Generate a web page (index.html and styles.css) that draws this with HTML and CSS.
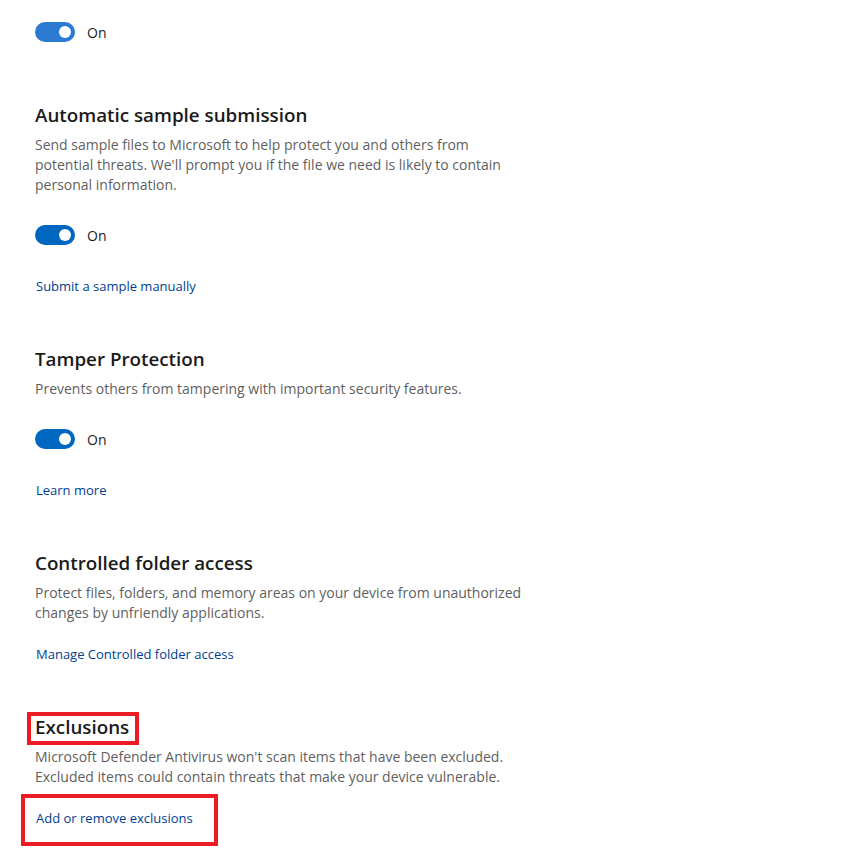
FILE: index.html
```html
<!DOCTYPE html>
<html lang="en">
<head>
    <meta charset="UTF-8">
    <meta name="viewport" content="width=device-width, initial-scale=1.0">
    <title>Virus &amp; threat protection settings</title>
    <link rel="stylesheet" href="styles.css">
</head>
<body>

<div class="page">
    <div class="toggle-row first">
        <span class="toggle light"><span class="knob"></span></span>
        <span class="toggle-label">On</span>
    </div>

    <section class="setting">
        <h2 class="title">Automatic sample submission</h2>
        <p class="desc">Send sample files to Microsoft to help protect you and others from potential threats. We'll prompt you if the file we need is likely to contain personal information.</p>
        <div class="toggle-row">
            <span class="toggle"><span class="knob"></span></span>
            <span class="toggle-label">On</span>
        </div>
        <a class="link" href="#">Submit a sample manually</a>
    </section>

    <section class="setting">
        <h2 class="title">Tamper Protection</h2>
        <p class="desc">Prevents others from tampering with important security features.</p>
        <div class="toggle-row">
            <span class="toggle"><span class="knob"></span></span>
            <span class="toggle-label">On</span>
        </div>
        <a class="link" href="#">Learn more</a>
    </section>

    <section class="setting">
        <h2 class="title">Controlled folder access</h2>
        <p class="desc">Protect files, folders, and memory areas on your device from unauthorized changes by unfriendly applications.</p>
        <a class="link near" href="#">Manage Controlled folder access</a>
    </section>

    <section class="setting">
        <h2 class="title"><span class="marked marked-title">Exclusions</span></h2>
        <p class="desc">Microsoft Defender Antivirus won't scan items that have been excluded. Excluded items could contain threats that make your device vulnerable.</p>
        <a class="link near" href="#"><span class="marked marked-link">Add or remove exclusions</span></a>
    </section>
</div>

</body>
</html>
```

FILE: styles.css
```css
body {
    margin: 0;
    background-color: #fff;
    font-family: "Open Sans", "Noto Sans", sans-serif;
    color: #1b1b1b;
}
.page {
    width: 490px;
    padding: 22px 0 40px 35px;
}
.toggle-row {
    display: flex;
    align-items: center;
    height: 20px;
    margin-top: 30px;
}
.toggle-row.first {
    margin-top: 0;
}
.toggle {
    position: relative;
    width: 40px;
    height: 20px;
    border-radius: 10px;
    background-color: #0067c0;
}
.toggle.light {
    background-color: #2a7bd1;
}
.knob {
    position: absolute;
    top: 4px;
    right: 4px;
    width: 12px;
    height: 12px;
    border-radius: 50%;
    background-color: #fff;
}
.toggle-label {
    margin-left: 12px;
    font-size: 14px;
    color: #1b1b1b;
}
.setting {
    margin-top: 59px;
}
.title {
    margin: 0;
    font-size: 18.8px;
    font-weight: 600;
    line-height: 28px;
    color: #1b1b1b;
}
.desc {
    margin: 6px 0 0;
    font-size: 14px;
    line-height: 20px;
    color: #5f5f5f;
}
.link {
    display: block;
    width: max-content;
    margin-top: 31px;
    margin-left: 1px;
    font-size: 13px;
    line-height: 20px;
    color: #003e92;
    text-decoration: none;
}
.link.near {
    margin-top: 21px;
}
.setting + .setting {
    margin-top: 49px;
}
.marked {
    position: relative;
}
.marked::after {
    content: "";
    position: absolute;
    border: 4px solid #ec1c24;
}
.marked-title::after {
    left: -8px;
    right: -10px;
    top: -2px;
    bottom: -5px;
}
.marked-link::after {
    left: -15px;
    right: -25px;
    top: -15px;
    bottom: -19px;
}
```
